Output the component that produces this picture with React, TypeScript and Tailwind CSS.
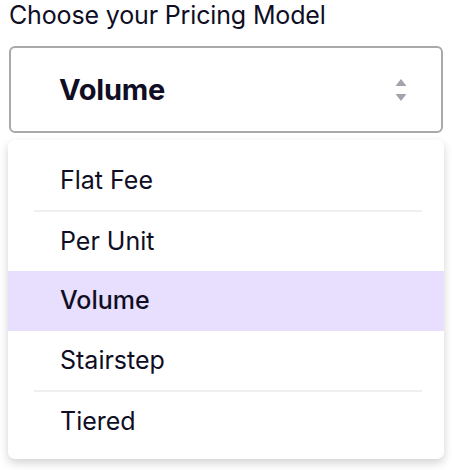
import { FC } from "react";

const options = ["Flat Fee", "Per Unit", "Volume", "Stairstep", "Tiered"];
const selected = "Volume";

const SortArrows: FC = () => (
  <svg width="12" height="24" viewBox="0 0 12 24" className="text-[#a3a3ad]">
    <path d="M6 1 L11.5 8 H0.5 Z" fill="currentColor" />
    <path d="M6 23 L11.5 16 H0.5 Z" fill="currentColor" />
  </svg>
);

const App: FC = () => {
  return (
    <div
      className="w-[452px] h-[470px] bg-white text-[#0f0e24]"
      style={{ fontFamily: "Inter, 'Noto Sans', sans-serif" }}
    >
      <div className="pl-[9px] text-[25px] leading-[30px] tracking-[-0.15px]">Choose your Pricing Model</div>

      <div className="mt-[16px] ml-[9px] w-[434px] h-[87px] border-2 border-[#a9a9a9] rounded-[6px] flex items-center justify-between pl-[48px] pr-[34px]">
        <span className="text-[29px] font-bold tracking-[-0.2px]">Volume</span>
        <SortArrows />
      </div>

      <div className="mt-[7px] ml-[8px] w-[436px] rounded-[7px] bg-white shadow-[0_4px_10px_rgba(0,0,0,0.18)] pt-[11px] pb-[8px] flex flex-col">
        {options.map((opt, i) => {
          const active = opt === selected;
          const prevActive = i > 0 && options[i - 1] === selected;
          return (
            <div key={opt}>
              {i > 0 && !active && !prevActive && (
                <div className="ml-[26px] mr-[22px] h-[2px] bg-[#efefef]" />
              )}
              <div
                className={`h-[59px] flex items-center pl-[52px] text-[25px] ${
                  active ? "bg-[#e8defd] h-[60px] font-medium" : ""
                }`}
              >
                {opt}
              </div>
            </div>
          );
        })}
      </div>
    </div>
  );
};

export default App;
